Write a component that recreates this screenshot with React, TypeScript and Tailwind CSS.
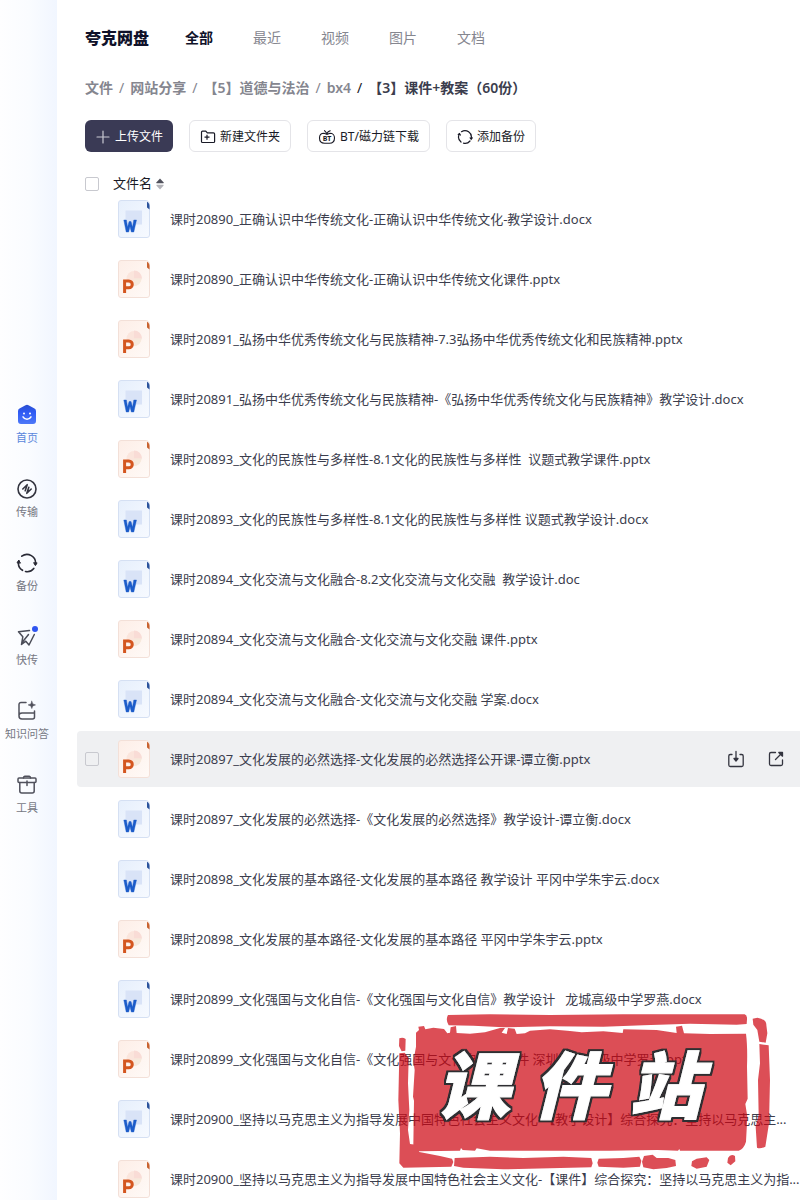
import { ReactNode } from "react";

type FileType = "word" | "ppt";

const tabs = ["全部", "最近", "视频", "图片", "文档"];

const crumbs = ["文件", "网站分享", "【5】道德与法治", "bx4"];

const files: { name: string; type: FileType; active?: boolean }[] = [
  { name: "课时20890_正确认识中华传统文化-正确认识中华传统文化-教学设计.docx", type: "word" },
  { name: "课时20890_正确认识中华传统文化-正确认识中华传统文化课件.pptx", type: "ppt" },
  { name: "课时20891_弘扬中华优秀传统文化与民族精神-7.3弘扬中华优秀传统文化和民族精神.pptx", type: "ppt" },
  { name: "课时20891_弘扬中华优秀传统文化与民族精神-《弘扬中华优秀传统文化与民族精神》教学设计.docx", type: "word" },
  { name: "课时20893_文化的民族性与多样性-8.1文化的民族性与多样性  议题式教学课件.pptx", type: "ppt" },
  { name: "课时20893_文化的民族性与多样性-8.1文化的民族性与多样性 议题式教学设计.docx", type: "word" },
  { name: "课时20894_文化交流与文化融合-8.2文化交流与文化交融  教学设计.doc", type: "word" },
  { name: "课时20894_文化交流与文化融合-文化交流与文化交融 课件.pptx", type: "ppt" },
  { name: "课时20894_文化交流与文化融合-文化交流与文化交融 学案.docx", type: "word" },
  { name: "课时20897_文化发展的必然选择-文化发展的必然选择公开课-谭立衡.pptx", type: "ppt", active: true },
  { name: "课时20897_文化发展的必然选择-《文化发展的必然选择》教学设计-谭立衡.docx", type: "word" },
  { name: "课时20898_文化发展的基本路径-文化发展的基本路径 教学设计 平冈中学朱宇云.docx", type: "word" },
  { name: "课时20898_文化发展的基本路径-文化发展的基本路径 平冈中学朱宇云.pptx", type: "ppt" },
  { name: "课时20899_文化强国与文化自信-《文化强国与文化自信》教学设计   龙城高级中学罗燕.docx", type: "word" },
  { name: "课时20899_文化强国与文化自信-《文化强国与文化自信》课件 深圳龙城高级中学罗燕.pptx", type: "ppt" },
  { name: "课时20900_坚持以马克思主义为指导发展中国特色社会主义文化-【教学设计】综合探究：坚持以马克思主...", type: "word" },
  { name: "课时20900_坚持以马克思主义为指导发展中国特色社会主义文化-【课件】综合探究：坚持以马克思主义为指...", type: "ppt" },
];

const HomeIcon = () => (
  <svg width="22" height="22" viewBox="0 0 22 22" aria-hidden="true">
    <defs>
      <linearGradient id="home" x1="0" y1="0" x2="0" y2="1">
        <stop offset="0" stopColor="#2a4fd0" />
        <stop offset="0.4" stopColor="#2f5bf5" />
        <stop offset="1" stopColor="#4d78f8" />
      </linearGradient>
    </defs>
    <path d="M9.5 1.3a3 3 0 0 1 3 0l6 3.2A3 3 0 0 1 20 7.2V17a3 3 0 0 1-3 3H5a3 3 0 0 1-3-3V7.2a3 3 0 0 1 1.5-2.7z" fill="url(#home)" />
    <circle cx="8" cy="9.5" r="1" fill="#fff" />
    <circle cx="14" cy="9.5" r="1" fill="#fff" />
    <path d="M7 12.8c1.800 3.200 6.200 3.200 8 0" fill="none" stroke="#fff" strokeWidth="1.5" strokeLinecap="round" />
  </svg>
);

const TransferIcon = () => (
  <svg width="22" height="22" viewBox="0 0 22 22" fill="none" stroke="#33343f" strokeWidth="1.6" strokeLinecap="round" strokeLinejoin="round" aria-hidden="true">
    <circle cx="11" cy="11" r="9" />
    <path d="M6.800 11 11.200 6.700 9.200 12.800M15.200 11l-4.400 4.300 2-6.100" />
  </svg>
);

const SyncIcon = () => (
  <svg width="22" height="22" viewBox="0 0 22 22" fill="none" stroke="#292a35" strokeWidth="1.6" strokeLinecap="round" aria-hidden="true">
    <path d="M5.8 4.200a8.600 8.600 0 0 1 13.700 8M17.800 16.400a8.600 8.600 0 0 1-8.300 3.100M6.500 18.300A8.600 8.600 0 0 1 2.800 8.800" />
    <path d="m17.8 11 1.600 2.600 1.500-2.400zM4.300 10.800 2.700 8.200l-1.500 2.400z" fill="#292a35" strokeWidth="1" />
  </svg>
);

const BackupIcon = () => (
  <svg width="16" height="16" viewBox="0 0 16 16" fill="none" stroke="#191a26" strokeWidth="1.2" strokeLinecap="round" aria-hidden="true">
    <path d="M4.500 2.700a6.400 6.400 0 0 1 9.700 6.800M13 12a6.400 6.400 0 0 1-6.500 2.200M4 13A6.400 6.400 0 0 1 2.400 5" />
    <path d="m13.200 8.800 1 1.400 1-1.400M3.400 6 2.500 4.700l-1.200.9" />
  </svg>
);

const SendIcon = () => (
  <svg width="22" height="22" viewBox="0 0 22 22" fill="none" stroke="#4b4d58" strokeWidth="1.5" strokeLinecap="round" strokeLinejoin="round" aria-hidden="true">
    <path d="M13.500 4.500 2.500 5.800l4.300 5L5.500 18.500l4.300-3.300L13 19l5.300-10.500M12.500 8.500 6.500 16" />
    <circle cx="19" cy="3" r="3" fill="#2f55f0" stroke="none" />
  </svg>
);

const KnowledgeIcon = () => (
  <svg width="22" height="22" viewBox="0 0 22 22" fill="none" stroke="#50515c" strokeWidth="1.5" strokeLinecap="round" strokeLinejoin="round" aria-hidden="true">
    <path d="M10 2.500H5a2 2 0 0 0-2 2V16a3 3 0 0 0 3 3h10.500a2 2 0 0 0 2-2v-6M3 15.500c0-1.800 1-2.500 3-2.500h12.300" />
    <path d="m15.800 1.200 1 2.700 2.700 1-2.700 1-1 2.700-1-2.700-2.700-1 2.700-1z" fill="#50515c" strokeWidth=".5" />
  </svg>
);

const ToolIcon = () => (
  <svg width="22" height="22" viewBox="0 0 22 22" fill="none" stroke="#50515c" strokeWidth="1.5" strokeLinecap="round" strokeLinejoin="round" aria-hidden="true">
    <rect x="2" y="4" width="18" height="4.500" rx="1" />
    <path d="M3.800 8.500V17a2 2 0 0 0 2 2h10.400a2 2 0 0 0 2-2V8.500M7.500 4c0-1.200.4-1.800 1.200-1.800h4.600c.8 0 1.200.6 1.200 1.800M11 7v4.500" />
  </svg>
);

const menu: { label: string; icon: ReactNode; active?: boolean }[] = [
  { label: "首页", icon: <HomeIcon />, active: true },
  { label: "传输", icon: <TransferIcon /> },
  { label: "备份", icon: <SyncIcon /> },
  { label: "快传", icon: <SendIcon /> },
  { label: "知识问答", icon: <KnowledgeIcon /> },
  { label: "工具", icon: <ToolIcon /> },
];

const NewFolderIcon = () => (
  <svg width="16" height="16" viewBox="0 0 16 16" fill="none" stroke="#191a26" strokeWidth="1.2" strokeLinejoin="round" aria-hidden="true">
    <path d="M1.500 3.200c0-.7.400-1.100 1-1.100h3.300l1.500 1.700h6.200c.7 0 1.100.4 1.100 1.100v7.500c0 .7-.4 1.100-1.100 1.100h-11c-.6 0-1-.4-1-1.100zM7 5.700v5M4.500 8.200h5" />
  </svg>
);

const BtIcon = () => (
  <svg width="18" height="16" viewBox="0 0 18 16" fill="none" stroke="#191a26" strokeWidth="1.1" strokeLinecap="round" aria-hidden="true">
    <path d="M6 4.300C3.300 4.300 1.500 6.200 1.500 9c0 3.200 2 5.200 5 5.200h5c3 0 5-2 5-5.200 0-2.800-1.800-4.700-4.500-4.700L9 5.300zM9 4.500 6.500 1.700M9 4.500l1.200-1.700 2-1" />
    <text x="9" y="11.800" textAnchor="middle" fontSize="7" fontWeight="700" fill="#191a26" stroke="none">BT</text>
  </svg>
);

const PlusIcon = () => (
  <svg width="16" height="16" viewBox="0 0 16 16" stroke="#c9c9d3" strokeWidth="1.2" strokeLinecap="round" aria-hidden="true">
    <path d="M8 2v12M2 8h12" />
  </svg>
);

const FileIcon = ({ type }: { type: FileType }) => {
  const word = type === "word";
  return (
    <svg className="shrink-0" width="32" height="38" viewBox="0 0 32 38" aria-hidden="true">
      <defs>
        <linearGradient id="word" x1="0" y1="0" x2="1" y2="1">
          <stop offset="0" stopColor="#e6effc" />
          <stop offset="1" stopColor="#f7faff" />
        </linearGradient>
        <linearGradient id="ppt" x1="0" y1="0" x2="1" y2="1">
          <stop offset="0" stopColor="#fdeee7" />
          <stop offset="1" stopColor="#fffaf7" />
        </linearGradient>
      </defs>
      <path
        d="M3 .5h25.500c1.500.3 3 2 3 4V35a2.500 2.500 0 0 1-2.500 2.500H3A2.500 2.500 0 0 1 .5 35V3A2.500 2.500 0 0 1 3 .5z"
        fill={word ? "url(#word)" : "url(#ppt)"}
        stroke={word ? "#d5e0f3" : "#f3e0d8"}
      />
      <path d="M29 1.800c1.600.8 2.500 2.200 2.500 4V9.500L29 7.500z" fill={word ? "#2a539c" : "#c9622f"} />
      {word ? (
        <path d="M7.500 10.500h16.500v14H7.500z" fill="#d9e3f7" />
      ) : (
        <g>
          <circle cx="16" cy="18.500" r="7.500" fill="#fbe5dc" />
          <path d="M16 18.500v-8a8 8 0 0 1 8 8z" fill="#f9dcd6" />
          <path d="M16 18.500h7.500a7.500 7.500 0 0 1-7.500 7.500z" fill="#f6e9dc" />
        </g>
      )}
      {word ? (
        <path d="m5.800 20 2.400 12h2.500L12 26.500l1.300 5.500h2.500l2.700-12h-2.700l-1.300 7-1.500-5.500h-1.900l-1.500 5.500-1.200-7z" fill="#1c5cc9" stroke="#1c5cc9" strokeWidth=".4" />
      ) : (
        <path d="M6.600 33V21h4.200c4.600 0 4.600 6.800 0 6.800H6.600" fill="none" stroke="#d4561f" strokeWidth="3" />
      )}
    </svg>
  );
};

const Checkbox = ({ label }: { label: string }) => (
  <input type="checkbox" aria-label={label} className="size-[14px] shrink-0 appearance-none rounded-xs border border-[#c8c9cf]" />
);

const FileRow = ({ name, type, active }: { name: string; type: FileType; active?: boolean }) => (
  <li className={`flex h-14 shrink-0 items-center rounded-l pl-2 ${active ? "bg-[#eff0f2]" : ""}`}>
    <div className="flex w-[33px] shrink-0 items-center">{active && <Checkbox label={name} />}</div>
    <FileIcon type={type} />
    <span className="ml-5 min-w-0 flex-1 overflow-hidden text-[13px] leading-5 whitespace-pre text-[#3b3d4d]">{name}</span>
    {active && (
      <div className="flex gap-5 pr-[14px]">
        <button aria-label="下载" className="size-5">
          <svg width="20" height="20" viewBox="0 0 20 20" fill="none" stroke="#33343f" strokeWidth="1.3" strokeLinecap="round" strokeLinejoin="round" aria-hidden="true">
            <path d="M6 5.500H4.300a1.500 1.500 0 0 0-1.500 1.500v9a1.500 1.500 0 0 0 1.500 1.500h11.400a1.500 1.500 0 0 0 1.500-1.500V7a1.500 1.500 0 0 0-1.500-1.500H14M10 2.500v8" />
            <path d="m8 9.500 2 2.500 2-2.500z" fill="#33343f" />
          </svg>
        </button>
        <button aria-label="分享" className="size-5">
          <svg width="20" height="20" viewBox="0 0 20 20" fill="none" stroke="#33343f" strokeWidth="1.3" strokeLinecap="round" strokeLinejoin="round" aria-hidden="true">
            <path d="M9.500 3.500H5A1.500 1.500 0 0 0 3.500 5v10A1.500 1.500 0 0 0 5 16.500h10a1.500 1.500 0 0 0 1.500-1.500v-4M9.500 10.500l6-6" />
            <path d="M12.800 3.500h3.700v3.700z" fill="#33343f" />
          </svg>
        </button>
      </div>
    )}
  </li>
);

const Stamp = () => (
  <svg className="pointer-events-none absolute right-0 bottom-0 h-[200px] w-[410px]" viewBox="0 0 1230 600" role="img" aria-label="课件站">
    <defs>
      <filter id="outline" x="-5%" y="-10%" width="110%" height="120%">
        <feMorphology in="SourceAlpha" operator="dilate" radius="5" result="thick" />
        <feFlood floodColor="#2d2d30" />
        <feComposite in2="thick" operator="in" />
        <feMerge>
          <feMergeNode />
          <feMergeNode in="SourceGraphic" />
        </feMerge>
      </filter>
    </defs>
    <g fill="#ce0410" opacity="0.7">
      <path d="M174 45 300 43 480 45 700 43 1064 43Q1072 46 1071 58L1070 72 1040 74 900 71 760 76 640 80 480 79 340 82 250 77 176 76Q166 60 174 45z" />
      <path d="M78 98 87 90 85 80 102 78 106 88 130 83 162 87 172 100 180 98 182 82 198 78 200 99 240 101 285 97 330 84 345 84 335 98 350 102 354 84 374 86 380 102 405 100 420 92 480 88 540 93 575 97 640 94 698 99 700 88 800 90 860 99 858 80 876 77 882 100 960 102 1068 101Q1073 140 1071 200L1073 296 1066 312 1072 350 1068 425Q1062 446 1046 452L870 452 868 447 864 452 802 450 660 452 300 452 260 445 255 452 218 450 213 444 210 452 84 454 74 442 70 434 72 302 69 290 74 210 70 184 78 140z" />
      <path d="M1088 56 1102 53Q1130 58 1129 75L1132 100 1127 128 1108 125 1102 90 1090 74z" />
      <path d="M1108 132 1136 136 1140 240 1137 370 1126 440Q1110 448 1101 443L1097 380 1106 345 1104 240 1110 190z" />
      <path d="M28 115Q38 110 47 117L46 152 35 154 27 138z" />
      <path d="M28 160 44 158 56 175 54 250 58 330 54 390 60 432 78 434 88 456 150 468 186 476 190 486 184 500 40 503 28 490 30 400 25 300z" />
      <path d="M194 474 300 470 400 474 520 470 604 474 608 490 604 502 480 505 340 508 220 503 192 498z" />
      <path d="M626 476 700 474 748 470 754 482 750 500 700 503 626 500 622 488z" />
      <path d="M756 485 762 468 788 464 800 474 835 474 856 480 858 498 830 504 790 508 760 502z" />
      <path d="M906 484 920 476 950 472 958 480 950 500 920 506 904 498zM1014 474Q1022 460 1035 468L1036 484 1022 496 1012 488z" />
    </g>
    <text
      x="140 430 716"
      y="340"
      fontFamily="'Noto Sans CJK SC', sans-serif"
      fontSize="218"
      fontWeight="900"
      fontStyle="italic"
      fill="#fff"
      stroke="#fff"
      strokeWidth="3"
      filter="url(#outline)"
    >
      课件站
    </text>
  </svg>
);

export default function App() {
  const outline = "flex h-8 items-center gap-1 rounded-md border border-[#e4e4e8] px-2.5 pt-px text-xs text-[#191a26]";

  return (
    <div className="relative flex h-screen overflow-hidden bg-white font-['Noto_Sans','Noto_Sans_CJK_SC',sans-serif]">
      <aside className="flex w-[57px] shrink-0 flex-col bg-linear-to-r from-[#fefeff] via-[#fafcff] to-[#f1f6ff]">
        <nav className="my-auto flex flex-col gap-8 pt-5">
          {menu.map((item) => (
            <a key={item.label} href="#" className={`flex flex-col items-center gap-1 pr-[3px] text-[11px] leading-4 whitespace-nowrap ${item.active ? "text-[#5a87dc]" : "text-[#767883]"}`}>
              {item.icon}
              {item.label}
            </a>
          ))}
        </nav>
      </aside>

      <main className="flex min-w-0 flex-1 flex-col pl-5">
        <header className="flex h-[76px] shrink-0 items-center pl-2">
          <h1 className="text-base font-black text-[#10122a]">夸克网盘</h1>
          <nav className="ml-9 flex gap-10 text-sm">
            {tabs.map((tab, i) => (
              <a key={tab} href="#" className={i === 0 ? "font-bold text-[#10122a]" : "text-[#85868f]"}>{tab}</a>
            ))}
          </nav>
        </header>

        <div className="flex h-6 shrink-0 items-center gap-1.5 pl-2 text-sm whitespace-nowrap">
          {crumbs.map((crumb, i) => (
            <div key={crumb} className="flex gap-1.5">
              <a href="#" className="font-semibold text-[#85868f]">{crumb}</a>
              <span className={i === crumbs.length - 1 ? "text-[#191a26]" : "text-[#85868f]"}>/</span>
            </div>
          ))}
          <span className="font-semibold text-[#3b3d4d]">【3】课件+教案（60份）</span>
        </div>

        <div className="mt-5 flex shrink-0 gap-4 pl-2">
          <button className="flex h-8 items-center gap-1 rounded-md bg-[#3a3a55] px-2.5 pt-px text-xs text-white">
            <PlusIcon />
            上传文件
          </button>
          <button className={outline}><NewFolderIcon />新建文件夹</button>
          <button className={outline}><BtIcon />BT/磁力链下载</button>
          <button className={outline}><BackupIcon />添加备份</button>
        </div>

        <div className="mt-5 flex h-[19px] shrink-0 items-center pt-[5px] pl-2 text-[13px] text-[#191a26]">
          <Checkbox label="全选" />
          <button className="ml-[14px] flex items-center gap-1">
            文件名
            <svg width="8" height="12" viewBox="0 0 8 12" aria-hidden="true">
              <path d="M4 .5 7.500 4.200V5.200H.5v-1z" fill="#50515c" />
              <path d="M4 11.500.5 7.800v-1h7v1z" fill="#b3b3b9" />
            </svg>
          </button>
        </div>

        <ul className="flex min-h-0 flex-1 flex-col gap-1 overflow-y-auto [scrollbar-width:none]">
          {files.map((file) => (
            <FileRow key={file.name} {...file} />
          ))}
        </ul>
      </main>

      <Stamp />
    </div>
  );
}
